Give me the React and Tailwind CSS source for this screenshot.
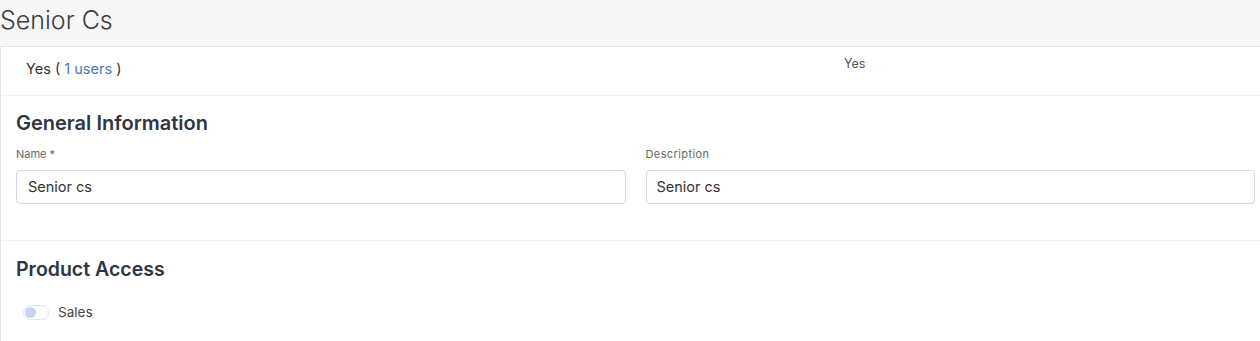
import React from 'react';

const App = () => {
  return (
    <div className="h-[341px] overflow-hidden bg-[#f7f7f7] font-['Inter',sans-serif] text-[#333]">
      <div className="h-[46px]">
        <h1 className="text-[25px] font-light leading-[34px] text-[#3a3d42] pt-[3px]">Senior Cs</h1>
      </div>

      <div className="bg-white border-t border-l border-[#e3e3ec] pb-[20px]">
        {/* Status row */}
        <div className="flex h-[49px] border-b border-[#f0f0f6]">
          <div className="w-[843px] pl-[25px] pt-[11px] text-[14.5px] text-[#333]">
            Yes ( <span className="text-[#4a78b0]">1 users</span> )
          </div>
          <div className="pt-[8px] text-[12.5px] text-[#555]">Yes</div>
        </div>

        {/* General Information */}
        <div className="pl-[15px] pr-[5px] pt-[15px] pb-[36px] border-b border-[#f0f0f6]">
          <h2 className="text-[20px] font-semibold leading-[24px] text-[#2f3542]">General Information</h2>
          <div className="grid grid-cols-2 gap-[20px] mt-[13px]">
            <div>
              <label className="block text-[11px] text-[#666] leading-[12px] mb-[10px]">Name *</label>
              <div className="h-[34px] rounded-[4px] border border-[#d3d9e6] px-[11px] flex items-center text-[14.5px] text-[#333]">
                Senior cs
              </div>
            </div>
            <div>
              <label className="block text-[11px] tracking-[0.4px] text-[#666] leading-[12px] mb-[10px]">Description</label>
              <div className="h-[34px] rounded-[4px] border border-[#d3d9e6] px-[10px] flex items-center text-[14.5px] text-[#333]">
                Senior cs
              </div>
            </div>
          </div>
        </div>

        {/* Product Access */}
        <div className="px-[15px] pt-[16px]">
          <h2 className="text-[19.5px] font-semibold leading-[24px] text-[#2f3542]">Product Access</h2>
          <div className="flex items-center mt-[21px] pl-[7px]">
            <div className="w-[26px] h-[15px] rounded-full border border-[#dfe4ee] bg-white flex items-center px-[1px]">
              <div className="w-[11px] h-[11px] rounded-full bg-[#c8d4ea]"></div>
            </div>
            <span className="ml-[9px] text-[13.5px] text-[#444]">Sales</span>
          </div>
        </div>
      </div>
    </div>
  );
};

export default App;
